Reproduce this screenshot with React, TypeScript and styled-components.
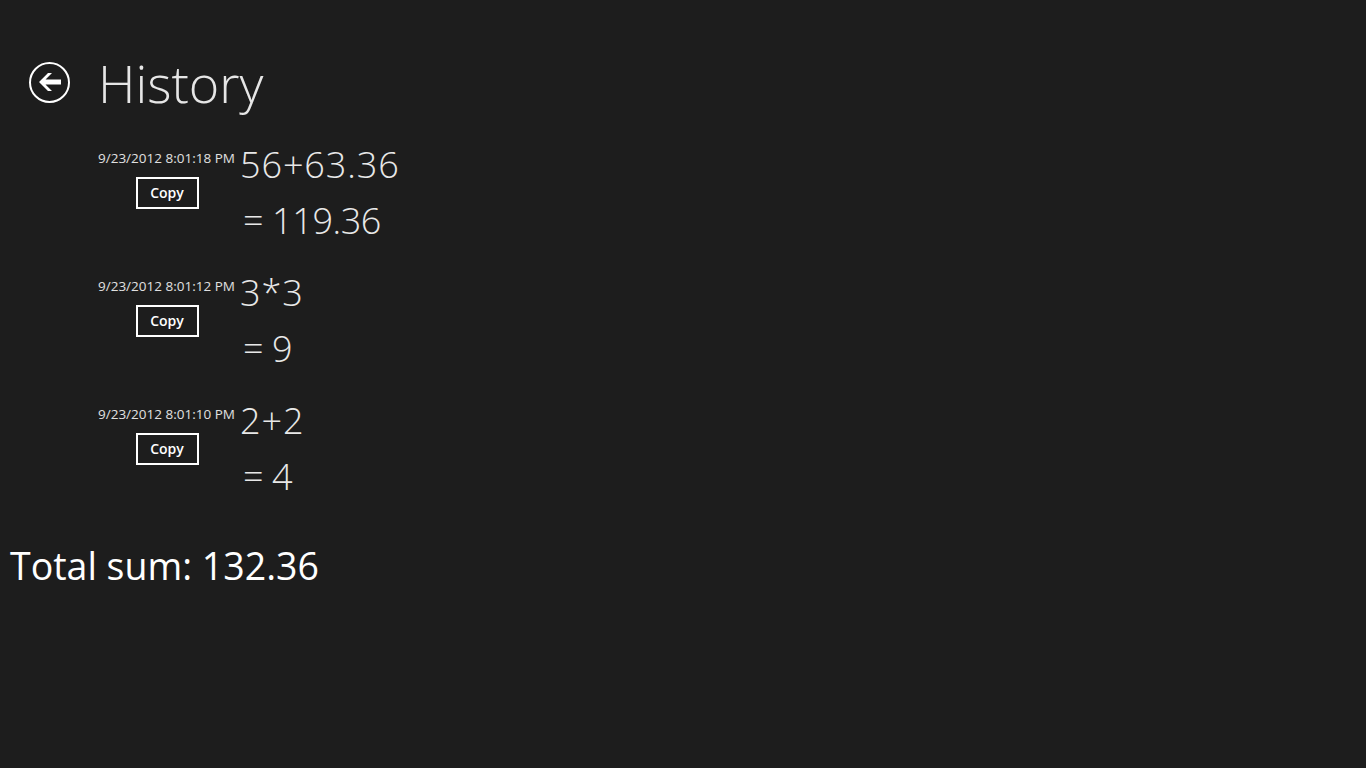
import React from 'react'
import styled, { createGlobalStyle } from 'styled-components'

const GlobalStyle = createGlobalStyle`
  html, body {
    margin: 0;
    padding: 0;
    background: #1d1d1d;
    font-family: 'Open Sans', 'Noto Sans', 'Liberation Sans', sans-serif;
    color: #ffffff;
  }
`

const Page = styled.div`
  width: 1366px;
  height: 768px;
  background: #1d1d1d;
  overflow: hidden;
  display: flex;
  flex-direction: column;
`

const Header = styled.div`
  display: flex;
  align-items: center;
  gap: 28px;
  padding: 52px 0 0 29px;
  height: 60px;
`

const BackButton = styled.button`
  width: 41px;
  height: 41px;
  border-radius: 50%;
  border: 2px solid #ffffff;
  background: transparent;
  padding: 0;
  display: flex;
  align-items: center;
  justify-content: center;
  box-sizing: border-box;
  cursor: pointer;
`

const Title = styled.h1`
  margin: 0;
  font-size: 52px;
  font-weight: 300;
  color: #e6e6e6;
`

const List = styled.div`
  display: flex;
  flex-direction: column;
  gap: 16px;
  padding: 38px 0 0 98px;
`

const Entry = styled.div`
  display: flex;
  height: 112px;
`

const Meta = styled.div`
  display: flex;
  flex-direction: column;
  align-items: center;
  width: 142px;
`

const Stamp = styled.div`
  font-size: 13.5px;
  color: #e0e0e0;
  line-height: 16px;
  white-space: nowrap;
  align-self: flex-start;
`

const CopyButton = styled.button`
  margin-top: 11px;
  margin-left: -4px;
  width: 63px;
  height: 32px;
  box-sizing: border-box;
  border: 2px solid #ffffff;
  background: transparent;
  color: #ffffff;
  font-family: inherit;
  font-size: 14px;
  font-weight: 600;
  padding: 0 0 2px;
`

const Calc = styled.div`
  display: flex;
  flex-direction: column;
  margin-top: -8px;
`

const Expr = styled.div`
  font-size: 36px;
  font-weight: 350;
  color: #e8e8e8;
  line-height: 46px;
  letter-spacing: 0.9px;
`

const Result = styled(Expr)`
  margin-top: 10px;
  padding-left: 3px;
  letter-spacing: -0.4px;
`

const Total = styled.div`
  padding: 22px 0 0 10px;
  font-size: 37.5px;
  color: #ffffff;
`

const entries = [
  { time: '9/23/2012 8:01:18 PM', expr: '56+63.36', result: '= 119.36' },
  { time: '9/23/2012 8:01:12 PM', expr: '3*3', result: '= 9' },
  { time: '9/23/2012 8:01:10 PM', expr: '2+2', result: '= 4' },
]

export default function App() {
  return (
    <>
      <GlobalStyle />
      <Page>
        <Header>
          <BackButton aria-label="Back">
            <svg width="24" height="20" viewBox="0 0 24 20">
              <path d="M1 10 L10 1 L14 1 L7.5 7.5 L23 7.5 L23 12.5 L7.5 12.5 L14 19 L10 19 Z" fill="#ffffff" />
            </svg>
          </BackButton>
          <Title>History</Title>
        </Header>
        <List>
          {entries.map(e => (
            <Entry key={e.time}>
              <Meta>
                <Stamp>{e.time}</Stamp>
                <CopyButton>Copy</CopyButton>
              </Meta>
              <Calc>
                <Expr>{e.expr}</Expr>
                <Result>{e.result}</Result>
              </Calc>
            </Entry>
          ))}
        </List>
        <Total>Total sum: 132.36</Total>
      </Page>
    </>
  )
}
